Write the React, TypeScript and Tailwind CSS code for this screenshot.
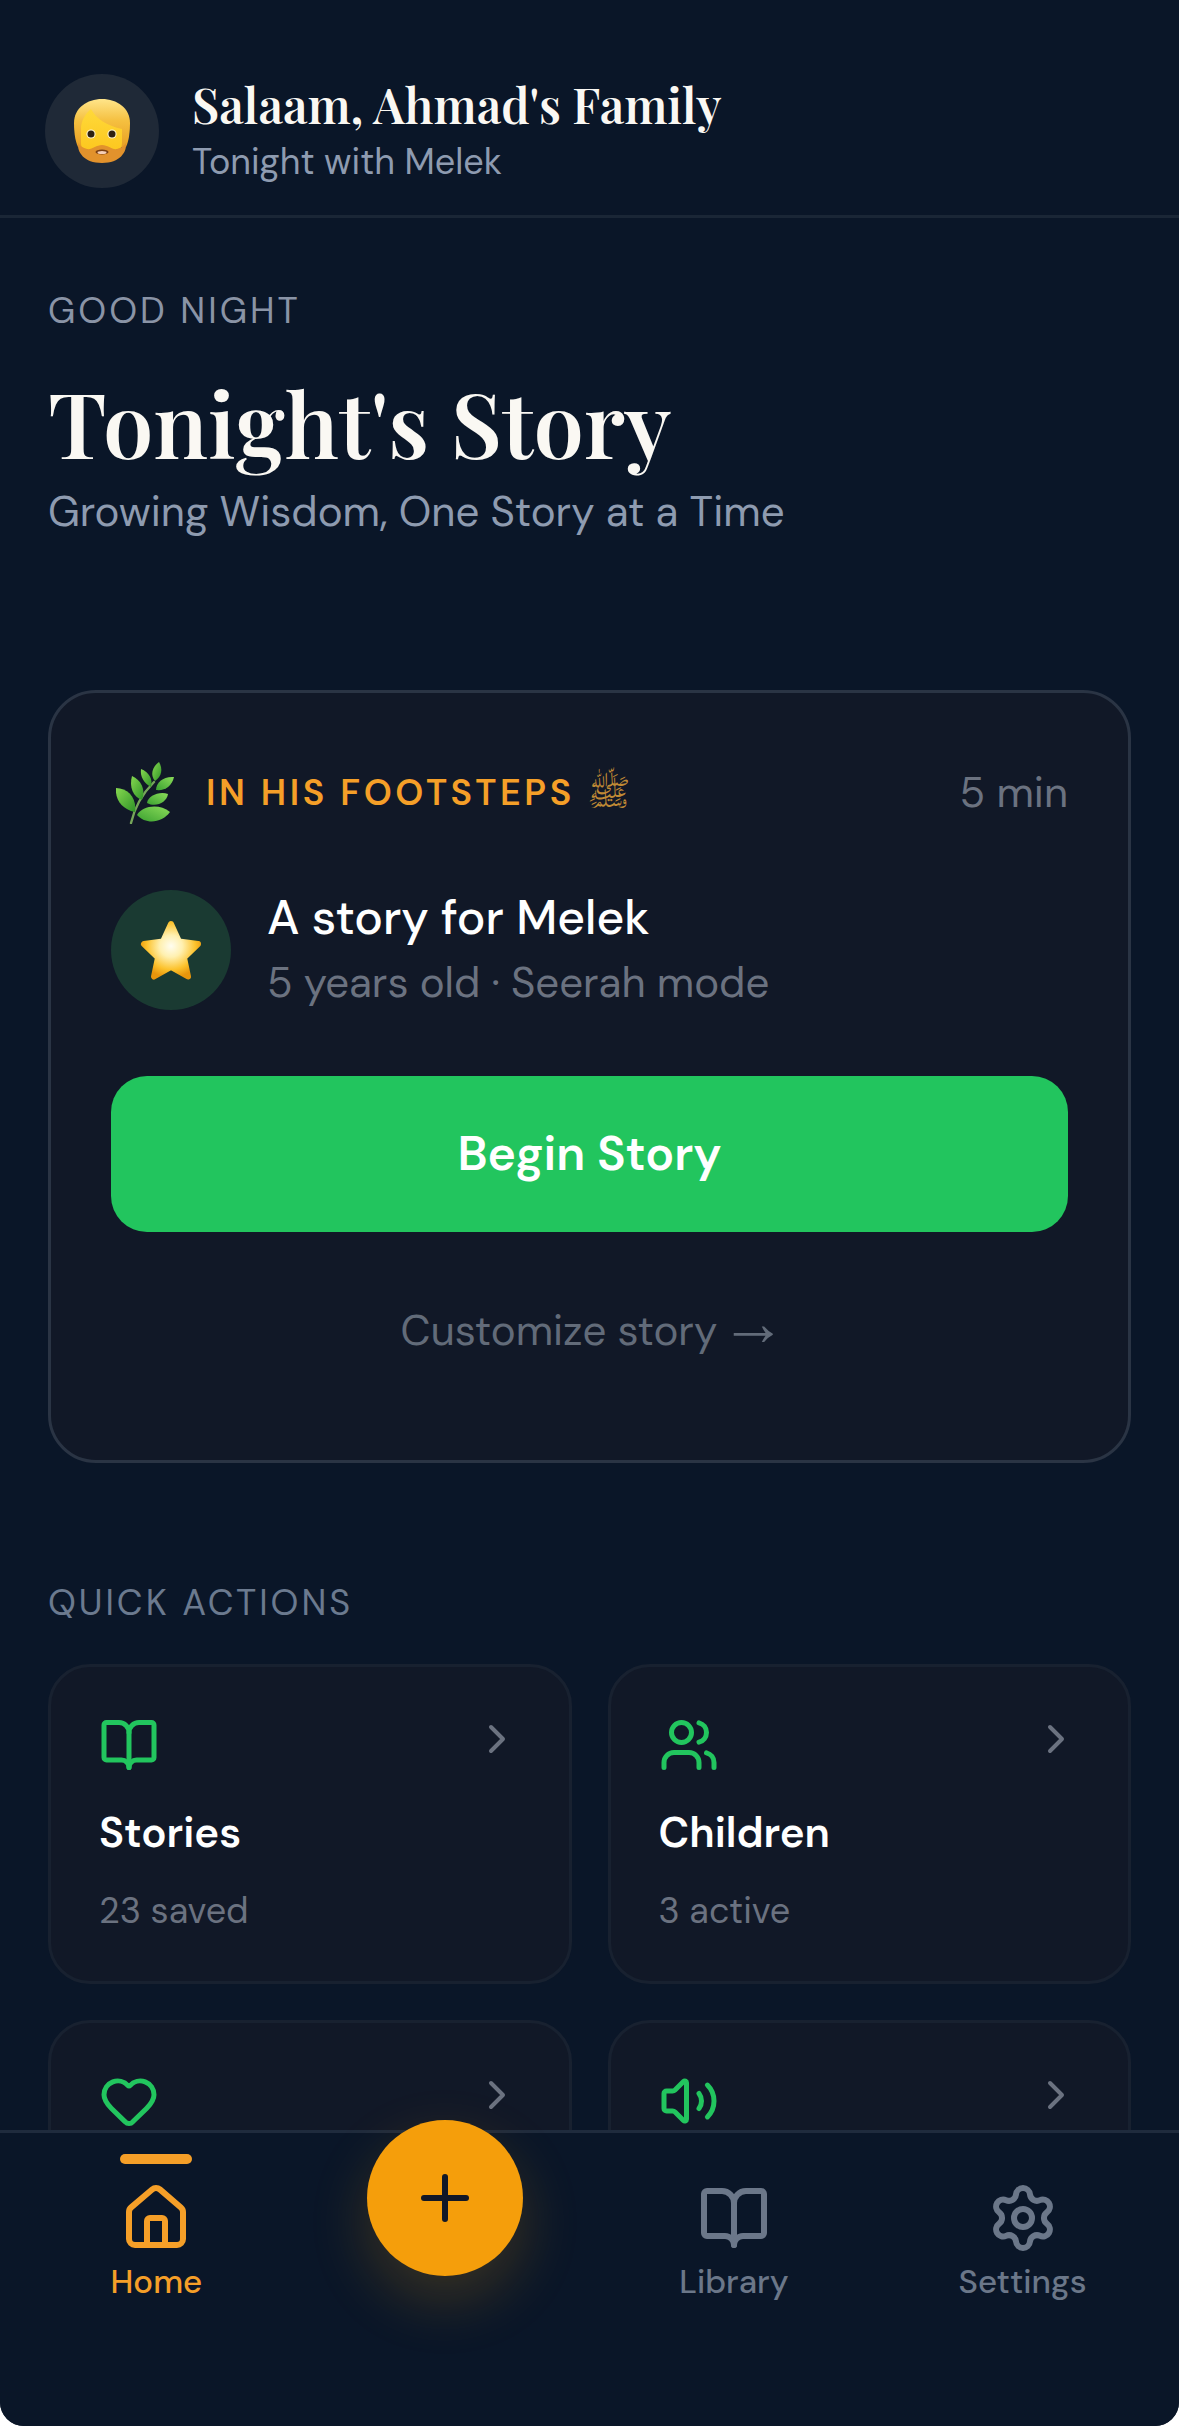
import { BookOpen, ChevronRight, Heart, House, Plus, Settings, Users, Volume2 } from 'lucide-react';

function BeardEmoji() {
  return (
    <svg viewBox="0 0 56 64" className="w-[56px] h-[64px]">
      <defs>
        <linearGradient id="face" x1="0" y1="0" x2="0" y2="1">
          <stop offset="0" stopColor="#ffd93a" />
          <stop offset="1" stopColor="#fcc419" />
        </linearGradient>
        <linearGradient id="hair" x1="0" y1="0" x2="0" y2="1">
          <stop offset="0" stopColor="#ffe58a" />
          <stop offset="0.45" stopColor="#f5c040" />
          <stop offset="1" stopColor="#e9a024" />
        </linearGradient>
      </defs>
      {/* hair */}
      <path d="M28 0C43 0 56 9 56 24c0 8-1 18-4 24H4C1 42 0 32 0 24 0 9 13 0 28 0z" fill="url(#hair)" />
      {/* face under the swept fringe */}
      <path d="M7 30c0-8 4-15 10-20 5 10 17 17 31 20v14c0 10-10 16-20 16S7 54 7 44z" fill="url(#face)" />
      {/* beard */}
      <path d="M4 44c2 3 5 5 9 6 5 1 9-4 15-4s10 5 15 4c4-1 7-3 9-6 1 9-6 20-24 20S3 53 4 44z" fill="#e2922c" />
      <ellipse cx="28" cy="53" rx="6.500" ry="2.600" fill="#7a3f12" />
      <ellipse cx="28" cy="53.500" rx="4.500" ry="1.500" fill="#f6d0b8" />
      {/* eyes */}
      <circle cx="17" cy="35" r="4.600" fill="#fff5d0" />
      <circle cx="17" cy="35" r="3.500" fill="#2e2010" />
      <circle cx="38" cy="35" r="4.600" fill="#fff5d0" />
      <circle cx="38" cy="35" r="3.500" fill="#2e2010" />
    </svg>
  );
}

function HerbEmoji() {
  return (
    <svg viewBox="0 0 58 62" className="w-[58px] h-[62px]">
      <defs>
        <linearGradient id="leaf" x1="0" y1="0" x2="1" y2="1">
          <stop offset="0" stopColor="#86d850" />
          <stop offset="1" stopColor="#2f9327" />
        </linearGradient>
        <linearGradient id="leaf2" x1="1" y1="0" x2="0" y2="1">
          <stop offset="0" stopColor="#8bdc5a" />
          <stop offset="1" stopColor="#3aa030" />
        </linearGradient>
      </defs>
      <path d="M15 61C18 48 26 32 38 20" fill="none" stroke="#76a65a" strokeWidth="2.400" strokeLinecap="round" />
      <path d="M19 50C6 47-1 38 0 26c12 0 21 10 19 24z" fill="url(#leaf)" />
      <path d="M26 38c-9-3-13-13-10-24 9 4 14 13 10 24z" fill="url(#leaf)" />
      <path d="M35 25c-7-4-11-10-10-18 8 3 12 10 10 18z" fill="url(#leaf)" />
      <path d="M39 19c-5-6-3-14 4-19 4 7 3 14-4 19z" fill="url(#leaf)" />
      <path d="M40 28c0-8 8-14 18-13-2 9-9 14-18 13z" fill="url(#leaf2)" />
      <path d="M31 41c1-7 12-12 21-9-1 8-12 14-21 9z" fill="url(#leaf2)" />
      <path d="M21 53c5-9 22-12 33-3-8 11-24 13-33 3z" fill="url(#leaf2)" />
    </svg>
  );
}

function StarEmoji() {
  return (
    <svg viewBox="0 0 64 62" className="w-[64px] h-[62px]">
      <defs>
        <radialGradient id="star" cx="0.5" cy="0.42" r="0.6">
          <stop offset="0" stopColor="#fffdf0" />
          <stop offset="0.35" stopColor="#fff0b0" />
          <stop offset="0.75" stopColor="#fcc22c" />
          <stop offset="1" stopColor="#e8960c" />
        </radialGradient>
      </defs>
      <path
        d="M32 5l8 17.500 19 2.500-14 13.500 4 19-17-9.500-17 9.500 4-19-14-13.500 19-2.500z"
        fill="url(#star)"
        stroke="url(#star)"
        strokeWidth="6"
        strokeLinejoin="round"
      />
    </svg>
  );
}

function ActionCard({ icon, title, sub }: { icon: React.ReactNode; title?: string; sub?: string }) {
  return (
    <div className="h-[320px] shrink-0 rounded-[42px] border-[3px] border-[#182130] bg-[#111827] p-[48px]">
      <div className="flex items-start justify-between">
        {icon}
        <ChevronRight size={48} strokeWidth={2} className="text-[#6b7280]" />
      </div>
      {title && <p className="mt-[29px] text-[42px] leading-[58px] font-semibold text-white">{title}</p>}
      {sub && <p className="mt-[22px] text-[36px] leading-[54px] text-[#6b7280]">{sub}</p>}
    </div>
  );
}

function NavItem({ icon, label, active }: { icon: React.ReactNode; label: string; active?: boolean }) {
  return (
    <div className={`flex flex-col items-center ${active ? 'text-[#f59f28]' : 'text-[#6b7789]'}`}>
      <div className={`h-[10px] w-[72px] rounded-full ${active ? 'bg-[#f59f28]' : ''}`} />
      <div className="mt-[18px]">{icon}</div>
      <span className="mt-[4px] text-[33px] leading-[48px] font-medium">{label}</span>
    </div>
  );
}

export default function App() {
  return (
    <div className="flex h-[2426px] w-[1179px] flex-col overflow-hidden rounded-b-[24px] bg-[#0a1628] font-['DM_Sans','Inter',sans-serif]">
      <main className="min-h-0 flex-1 overflow-hidden">
        <header className="flex h-[218px] items-start gap-[33px] border-b-[3px] border-[#1a2636] px-[45px] pt-[74px]">
          <div className="flex h-[114px] w-[114px] items-center justify-center rounded-full bg-[#1f2937]">
            <BeardEmoji />
          </div>
          <div>
            <h1 className="font-['Playfair_Display','Liberation_Serif',serif] text-[48px] leading-[60px] font-semibold text-[#faf8f3]">
              Salaam, Ahmad's Family
            </h1>
            <p className="mt-[3px] text-[36px] leading-[50px] text-[#8e9bb0]">Tonight with Melek</p>
          </div>
        </header>

        <section className="px-[48px] pt-[68px]">
          <p className="text-[36px] leading-[50px] tracking-[3px] text-[#8a94a6] uppercase">Good Night</p>
          <h2 className="mt-[30px] font-['Playfair_Display','Liberation_Serif',serif] text-[90px] leading-[112px] font-semibold text-[#faf8f3]">
            Tonight's Story
          </h2>
          <p className="mt-[4px] text-[42px] leading-[60px] text-[#8e9bb0]">Growing Wisdom, One Story at a Time</p>
        </section>

        <section className="mx-[48px] mt-[148px] h-[773px] rounded-[48px] border-[3px] border-[#2a3444] bg-[#111827] px-[60px] pt-[68px]">
          <div className="flex items-center justify-between">
            <div className="flex items-center gap-[32px] pl-[5px]">
              <HerbEmoji />
              <span className="text-[36px] font-semibold tracking-[3.600px] text-[#f59f28] uppercase">
                In His Footsteps <span className="font-['DejaVu_Sans',serif] font-normal tracking-normal text-[#c08a35]">ﷺ</span>
              </span>
            </div>
            <span className="text-[42px] text-[#6b7280]">5 min</span>
          </div>
          <div className="mt-[62px] flex items-center gap-[36px]">
            <div className="flex h-[120px] w-[120px] items-center justify-center rounded-full bg-[#1a3a32]">
              <StarEmoji />
            </div>
            <div>
              <p className="text-[48px] leading-[64px] font-medium text-white">A story for Melek</p>
              <p className="mt-[3px] text-[42px] leading-[60px] text-[#6b7280]">5 years old · Seerah mode</p>
            </div>
          </div>
          <button className="mt-[63px] h-[156px] w-full rounded-[36px] bg-[#22c55e] text-[48px] font-semibold text-white">
            Begin Story
          </button>
          <p className="mt-[69px] text-center text-[42px] leading-[60px] text-[#626b79]">
            Customize story{' '}
            <span className="-mx-[8px] font-['Liberation_Sans',sans-serif] text-[66px] leading-[0]">→</span>
          </p>
        </section>

        <section className="px-[48px] pt-[115px]">
          <p className="text-[36px] leading-[50px] tracking-[3px] text-[#6b7a8f] uppercase">Quick Actions</p>
          <div className="mt-[36px] grid grid-cols-2 gap-[36px]">
            <ActionCard icon={<BookOpen size={60} strokeWidth={2} className="text-[#22c55e]" />} title="Stories" sub="23 saved" />
            <ActionCard icon={<Users size={60} strokeWidth={2} className="text-[#22c55e]" />} title="Children" sub="3 active" />
            <ActionCard icon={<Heart size={60} strokeWidth={2} className="text-[#22c55e]" />} />
            <ActionCard icon={<Volume2 size={60} strokeWidth={2} className="text-[#22c55e]" />} />
          </div>
        </section>
      </main>

      <nav className="relative grid h-[296px] shrink-0 grid-cols-4 border-t-[3px] border-[#1f2b3d] bg-[#0a1628] px-[12px] pt-[21px]">
        <NavItem active icon={<House size={72} strokeWidth={2} />} label="Home" />
        <div className="flex justify-center">
          <button className="relative -mt-[34px] flex h-[156px] w-[156px] items-center justify-center rounded-full bg-[#f59e0b] text-[#111827] shadow-[0_24px_60px_rgba(245,158,11,0.2)]">
            <Plus size={72} strokeWidth={2} />
          </button>
        </div>
        <NavItem icon={<BookOpen size={72} strokeWidth={2} />} label="Library" />
        <NavItem icon={<Settings size={72} strokeWidth={2} />} label="Settings" />
      </nav>
    </div>
  );
}
